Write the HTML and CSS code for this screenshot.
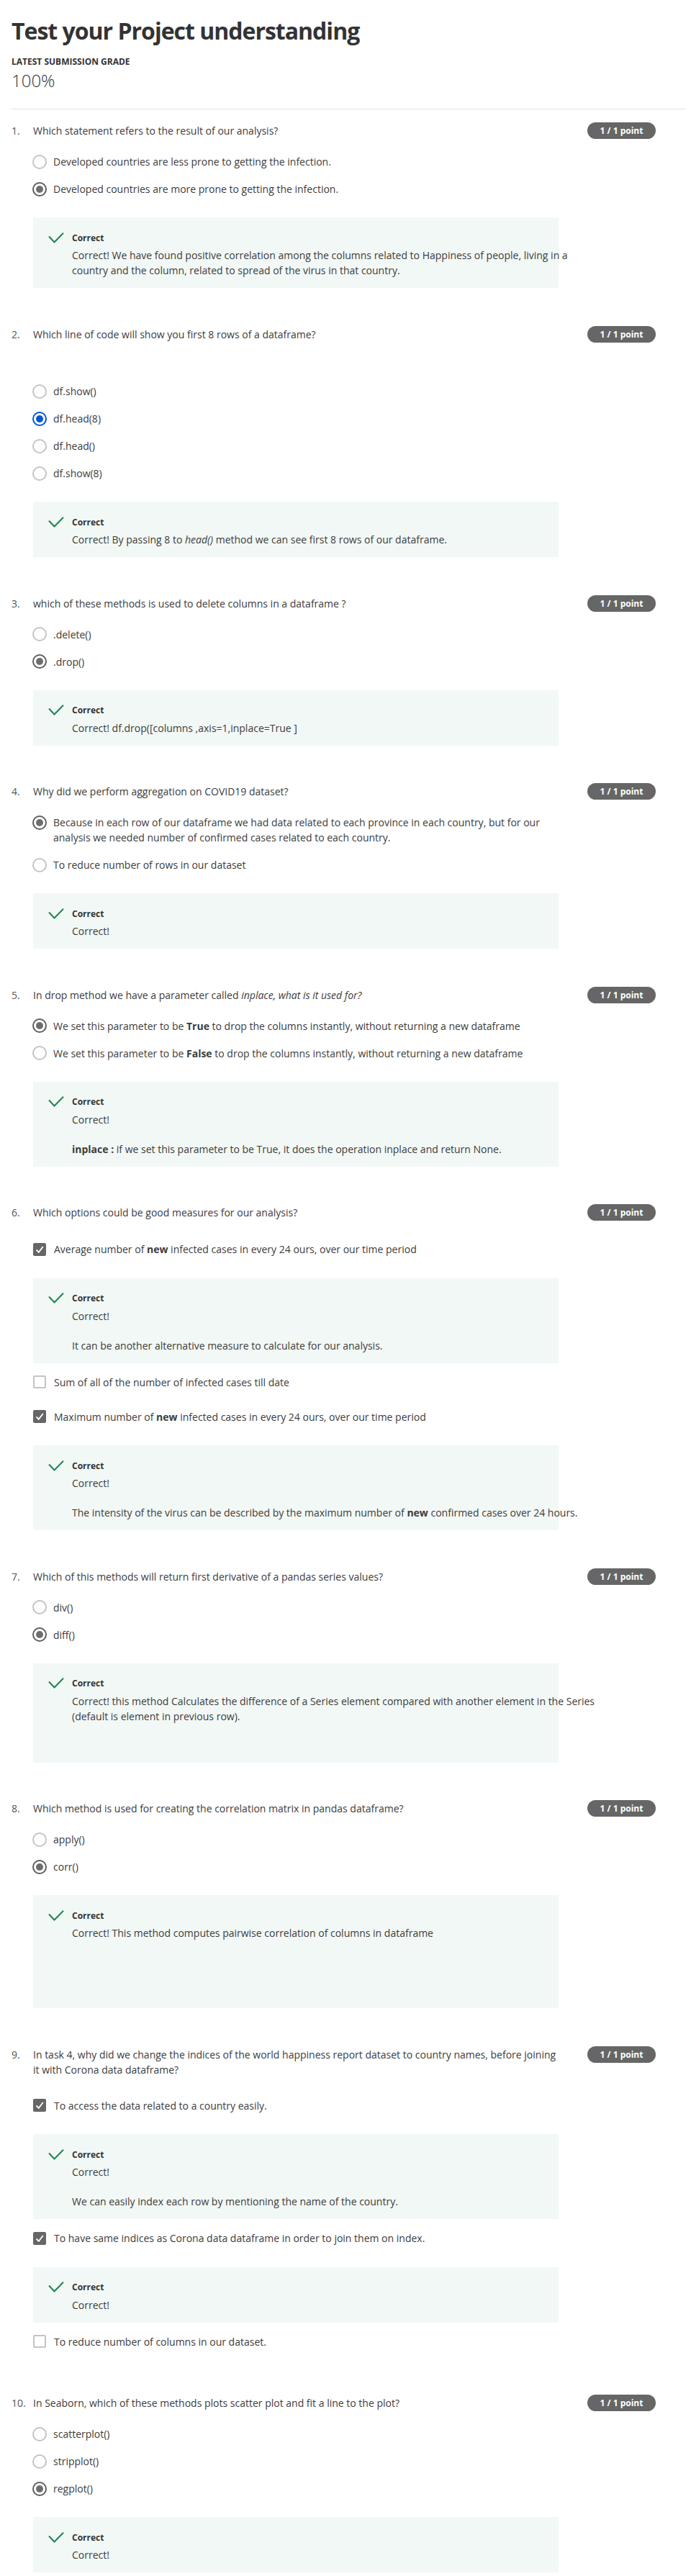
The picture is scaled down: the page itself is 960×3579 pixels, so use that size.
FILE: index.html
```html
<!DOCTYPE html>
<html lang="en">
<head>
<meta charset="utf-8">
<title>Test your Project understanding</title>
<link rel="stylesheet" href="styles.css">
</head>
<body>
<main class="page">
  <h1 class="title">Test your Project understanding</h1>
  <div class="grade-label">LATEST SUBMISSION GRADE</div>
  <div class="grade">100%</div>
  <hr class="divider">

  <div class="quiz">
    <!-- 1 -->
    <section class="question">
      <div class="q-head">
        <span class="q-num">1.</span>
        <div class="q-text">Which statement refers to the result of our analysis?</div>
        <span class="badge">1 / 1 point</span>
      </div>
      <div class="q-body">
        <div class="options-radio">
          <div class="opt"><span class="radio"></span><span class="opt-text">Developed countries are less prone to getting the infection.</span></div>
          <div class="opt"><span class="radio on"></span><span class="opt-text">Developed countries are more prone to getting the infection.</span></div>
        </div>
        <div class="feedback">
          <div class="fb-head"><svg class="check" viewBox="0 0 22 15"><path d="M1 5.5 L8.5 13.5 L21 0.8"/></svg><span>Correct</span></div>
          <div class="fb-body">Correct! We have found positive correlation among the columns related to Happiness of people, living in a country and the column, related to spread of the virus in that country.</div>
        </div>
      </div>
    </section>

    <!-- 2 -->
    <section class="question">
      <div class="q-head">
        <span class="q-num">2.</span>
        <div class="q-text">Which line of code will show you first 8 rows of a dataframe?</div>
        <span class="badge">1 / 1 point</span>
      </div>
      <div class="q-body">
        <div class="q-spacer"></div>
        <div class="options-radio">
          <div class="opt"><span class="radio"></span><span class="opt-text">df.show()</span></div>
          <div class="opt"><span class="radio on blue"></span><span class="opt-text">df.head(8)</span></div>
          <div class="opt"><span class="radio"></span><span class="opt-text">df.head()</span></div>
          <div class="opt"><span class="radio"></span><span class="opt-text">df.show(8)</span></div>
        </div>
        <div class="feedback">
          <div class="fb-head"><svg class="check" viewBox="0 0 22 15"><path d="M1 5.5 L8.5 13.5 L21 0.8"/></svg><span>Correct</span></div>
          <div class="fb-body">Correct! By passing 8 to <em>head()</em> method we can see first 8 rows of our dataframe.</div>
        </div>
      </div>
    </section>

    <!-- 3 -->
    <section class="question">
      <div class="q-head">
        <span class="q-num">3.</span>
        <div class="q-text">which of these methods is used to delete columns in a dataframe ?</div>
        <span class="badge">1 / 1 point</span>
      </div>
      <div class="q-body">
        <div class="options-radio">
          <div class="opt"><span class="radio"></span><span class="opt-text">.delete()</span></div>
          <div class="opt"><span class="radio on"></span><span class="opt-text">.drop()</span></div>
        </div>
        <div class="feedback">
          <div class="fb-head"><svg class="check" viewBox="0 0 22 15"><path d="M1 5.5 L8.5 13.5 L21 0.8"/></svg><span>Correct</span></div>
          <div class="fb-body">Correct! df.drop([columns ,axis=1,inplace=True ]</div>
        </div>
      </div>
    </section>

    <!-- 4 -->
    <section class="question">
      <div class="q-head">
        <span class="q-num">4.</span>
        <div class="q-text">Why did we perform aggregation on COVID19 dataset?</div>
        <span class="badge">1 / 1 point</span>
      </div>
      <div class="q-body">
        <div class="options-radio">
          <div class="opt"><span class="radio on"></span><span class="opt-text">Because in each row of our dataframe we had data related to each province in each country, but for our analysis we needed number of confirmed cases related to each country.</span></div>
          <div class="opt"><span class="radio"></span><span class="opt-text">To reduce number of rows in our dataset</span></div>
        </div>
        <div class="feedback">
          <div class="fb-head"><svg class="check" viewBox="0 0 22 15"><path d="M1 5.5 L8.5 13.5 L21 0.8"/></svg><span>Correct</span></div>
          <div class="fb-body">Correct!</div>
        </div>
      </div>
    </section>

    <!-- 5 -->
    <section class="question">
      <div class="q-head">
        <span class="q-num">5.</span>
        <div class="q-text">In drop method we have a parameter called <em>inplace, what is it used for?</em></div>
        <span class="badge">1 / 1 point</span>
      </div>
      <div class="q-body">
        <div class="options-radio">
          <div class="opt"><span class="radio on"></span><span class="opt-text">We set this parameter to be <strong>True</strong> to drop the columns instantly, without returning a new dataframe</span></div>
          <div class="opt"><span class="radio"></span><span class="opt-text">We set this parameter to be <strong>False</strong> to drop the columns instantly, without returning a new dataframe</span></div>
        </div>
        <div class="feedback">
          <div class="fb-head"><svg class="check" viewBox="0 0 22 15"><path d="M1 5.5 L8.5 13.5 L21 0.8"/></svg><span>Correct</span></div>
          <div class="fb-body">Correct!<div class="blank"></div><strong>inplace :</strong> if we set this parameter to be True, it does the operation inplace and return None.</div>
        </div>
      </div>
    </section>

    <!-- 6 -->
    <section class="question">
      <div class="q-head">
        <span class="q-num">6.</span>
        <div class="q-text">Which options could be good measures for our analysis?</div>
        <span class="badge">1 / 1 point</span>
      </div>
      <div class="q-body options-check">
        <div class="copt"><span class="cbox on"><svg viewBox="0 0 18 18"><path d="M4.5 9.5 L7.8 12.8 L13.8 5"/></svg></span><span class="opt-text">Average number of <strong>new</strong> infected cases in every 24 ours, over our time period</span></div>
        <div class="feedback cfb">
          <div class="fb-head"><svg class="check" viewBox="0 0 22 15"><path d="M1 5.5 L8.5 13.5 L21 0.8"/></svg><span>Correct</span></div>
          <div class="fb-body">Correct!<div class="blank"></div>It can be another alternative measure to calculate for our analysis.</div>
        </div>
        <div class="copt"><span class="cbox"></span><span class="opt-text">Sum of all of the number of infected cases till date</span></div>
        <div class="copt"><span class="cbox on"><svg viewBox="0 0 18 18"><path d="M4.5 9.5 L7.8 12.8 L13.8 5"/></svg></span><span class="opt-text">Maximum number of <strong>new</strong> infected cases in every 24 ours, over our time period</span></div>
        <div class="feedback cfb">
          <div class="fb-head"><svg class="check" viewBox="0 0 22 15"><path d="M1 5.5 L8.5 13.5 L21 0.8"/></svg><span>Correct</span></div>
          <div class="fb-body">Correct!<div class="blank"></div>The intensity of the virus can be described by the maximum number of <strong>new</strong> confirmed cases over 24 hours.</div>
        </div>
      </div>
    </section>

    <!-- 7 -->
    <section class="question">
      <div class="q-head">
        <span class="q-num">7.</span>
        <div class="q-text">Which of this methods will return first derivative of a pandas series values?</div>
        <span class="badge">1 / 1 point</span>
      </div>
      <div class="q-body">
        <div class="options-radio">
          <div class="opt"><span class="radio"></span><span class="opt-text">div()</span></div>
          <div class="opt"><span class="radio on"></span><span class="opt-text">diff()</span></div>
        </div>
        <div class="feedback">
          <div class="fb-head"><svg class="check" viewBox="0 0 22 15"><path d="M1 5.5 L8.5 13.5 L21 0.8"/></svg><span>Correct</span></div>
          <div class="fb-body">Correct! this method Calculates the difference of a Series element compared with another element in the Series (default is element in previous row).<div class="blank"></div><div class="blank"></div></div>
        </div>
      </div>
    </section>

    <!-- 8 -->
    <section class="question">
      <div class="q-head">
        <span class="q-num">8.</span>
        <div class="q-text">Which method is used for creating the correlation matrix in pandas dataframe?</div>
        <span class="badge">1 / 1 point</span>
      </div>
      <div class="q-body">
        <div class="options-radio">
          <div class="opt"><span class="radio"></span><span class="opt-text">apply()</span></div>
          <div class="opt"><span class="radio on"></span><span class="opt-text">corr()</span></div>
        </div>
        <div class="feedback">
          <div class="fb-head"><svg class="check" viewBox="0 0 22 15"><path d="M1 5.5 L8.5 13.5 L21 0.8"/></svg><span>Correct</span></div>
          <div class="fb-body">Correct! This method computes pairwise correlation of columns in dataframe<div class="blank"></div><div class="blank"></div><div class="blank"></div><div class="blank"></div></div>
        </div>
      </div>
    </section>

    <!-- 9 -->
    <section class="question">
      <div class="q-head">
        <span class="q-num">9.</span>
        <div class="q-text">In task 4, why did we change the indices of the world happiness report dataset to country names, before joining it with Corona data dataframe?</div>
        <span class="badge">1 / 1 point</span>
      </div>
      <div class="q-body options-check">
        <div class="copt"><span class="cbox on"><svg viewBox="0 0 18 18"><path d="M4.5 9.5 L7.8 12.8 L13.8 5"/></svg></span><span class="opt-text">To access the data related to a country easily.</span></div>
        <div class="feedback cfb">
          <div class="fb-head"><svg class="check" viewBox="0 0 22 15"><path d="M1 5.5 L8.5 13.5 L21 0.8"/></svg><span>Correct</span></div>
          <div class="fb-body">Correct!<div class="blank"></div>We can easily index each row by mentioning the name of the country.</div>
        </div>
        <div class="copt"><span class="cbox on"><svg viewBox="0 0 18 18"><path d="M4.5 9.5 L7.8 12.8 L13.8 5"/></svg></span><span class="opt-text">To have same indices as Corona data dataframe in order to join them on index.</span></div>
        <div class="feedback cfb">
          <div class="fb-head"><svg class="check" viewBox="0 0 22 15"><path d="M1 5.5 L8.5 13.5 L21 0.8"/></svg><span>Correct</span></div>
          <div class="fb-body">Correct!</div>
        </div>
        <div class="copt"><span class="cbox"></span><span class="opt-text">To reduce number of columns in our dataset.</span></div>
      </div>
    </section>

    <!-- 10 -->
    <section class="question">
      <div class="q-head">
        <span class="q-num">10.</span>
        <div class="q-text">In Seaborn, which of these methods plots scatter plot and fit a line to the plot?</div>
        <span class="badge">1 / 1 point</span>
      </div>
      <div class="q-body">
        <div class="options-radio">
          <div class="opt"><span class="radio"></span><span class="opt-text">scatterplot()</span></div>
          <div class="opt"><span class="radio"></span><span class="opt-text">stripplot()</span></div>
          <div class="opt"><span class="radio on"></span><span class="opt-text">regplot()</span></div>
        </div>
        <div class="feedback">
          <div class="fb-head"><svg class="check" viewBox="0 0 22 15"><path d="M1 5.5 L8.5 13.5 L21 0.8"/></svg><span>Correct</span></div>
          <div class="fb-body">Correct!</div>
        </div>
      </div>
    </section>
  </div>
</main>
</body>
</html>
```
FILE: styles.css
```css
* {
  box-sizing: border-box;
}

body {
  margin: 0;
  background: #ffffff;
  color: #333333;
  font-family: "Open Sans", "Liberation Sans", sans-serif;
}

.page {
  margin: 0 8px 0 16px;
  padding-top: 22.6px;
  padding-bottom: 10px;
}

.title {
  margin: 0;
  font-size: 32px;
  line-height: 40px;
  font-weight: 700;
  letter-spacing: -1px;
  color: #333333;
}

.grade-label {
  margin-top: 15.7px;
  font-size: 12px;
  line-height: 16px;
  font-weight: 700;
  color: #333333;
}

.grade {
  margin-top: 2px;
  font-size: 24px;
  line-height: 32px;
  font-weight: 300;
  color: #333333;
}

.divider {
  margin: 22.5px 0 0;
  height: 0;
  border: 0;
  border-top: 1px solid #e0e0e0;
}

.quiz {
  padding-top: 19.5px;
}

.question + .question {
  margin-top: 53.5px;
}

.q-head {
  display: flex;
  align-items: flex-start;
  font-size: 14px;
  line-height: 21px;
}

.q-num {
  flex: none;
  width: 30px;
  color: #555555;
}

.q-text {
  flex: none;
  width: 730px;
  color: #3c3c3c;
}

.badge {
  flex: none;
  width: 95px;
  height: 23px;
  margin-top: -1px;
  margin-left: 40px;
  border-radius: 12px;
  background: #666666;
  color: #ffffff;
  font-size: 12px;
  line-height: 23px;
  font-weight: 700;
  text-align: center;
}

.q-body {
  margin-left: 30px;
}

.q-spacer {
  height: 36.5px;
}

.options-radio {
  display: flex;
  flex-direction: column;
  gap: 17px;
  margin-top: 21px;
}

.opt,
.copt {
  display: flex;
  align-items: flex-start;
  font-size: 14px;
  line-height: 21px;
  color: #3c3c3c;
}

.opt-text {
  flex: 1;
  max-width: 701px;
}

.radio {
  flex: none;
  position: relative;
  width: 20px;
  height: 20px;
  margin: 0.5px 9px 0 -1px;
  border: 2px solid #c4c4c4;
  border-radius: 50%;
  background: #ffffff;
}

.radio.on {
  border-color: #5e5e5e;
}

.radio.on::after {
  content: "";
  position: absolute;
  left: 3px;
  top: 3px;
  width: 10px;
  height: 10px;
  border-radius: 50%;
  background: #6e6e6e;
}

.radio.blue {
  border-color: #0056d2;
}

.radio.blue::after {
  background: #0056d2;
}

.options-check {
  padding-top: 13px;
}

.copt {
  padding: 16px 0 11px;
}

.cbox {
  flex: none;
  width: 18px;
  height: 18px;
  margin: 1.5px 11px 0 0;
  border: 2px solid #c4c4c4;
  border-radius: 2px;
  background: #ffffff;
}

.cbox.on {
  border: 0;
  background: #666666;
}

.cbox svg {
  display: block;
  width: 18px;
  height: 18px;
  fill: none;
  stroke: #ffffff;
  stroke-width: 1.8;
}

.feedback {
  width: 730px;
  margin-top: 29px;
  padding: 16px 0 14px 54px;
  background: #f2f8f5;
}

.feedback.cfb {
  margin-top: 18.5px;
}

.fb-head {
  display: flex;
  align-items: center;
  gap: 11px;
  height: 24px;
  margin-left: -33px;
  font-size: 12px;
  font-weight: 700;
  color: #333333;
}

.check {
  flex: none;
  width: 22px;
  height: 15px;
  fill: none;
  stroke: #1f8354;
  stroke-width: 2;
}

.fb-body {
  width: 730px;
  margin-top: 2px;
  font-size: 14px;
  line-height: 21px;
  color: #3c3c3c;
}

.blank {
  height: 20px;
}
```
